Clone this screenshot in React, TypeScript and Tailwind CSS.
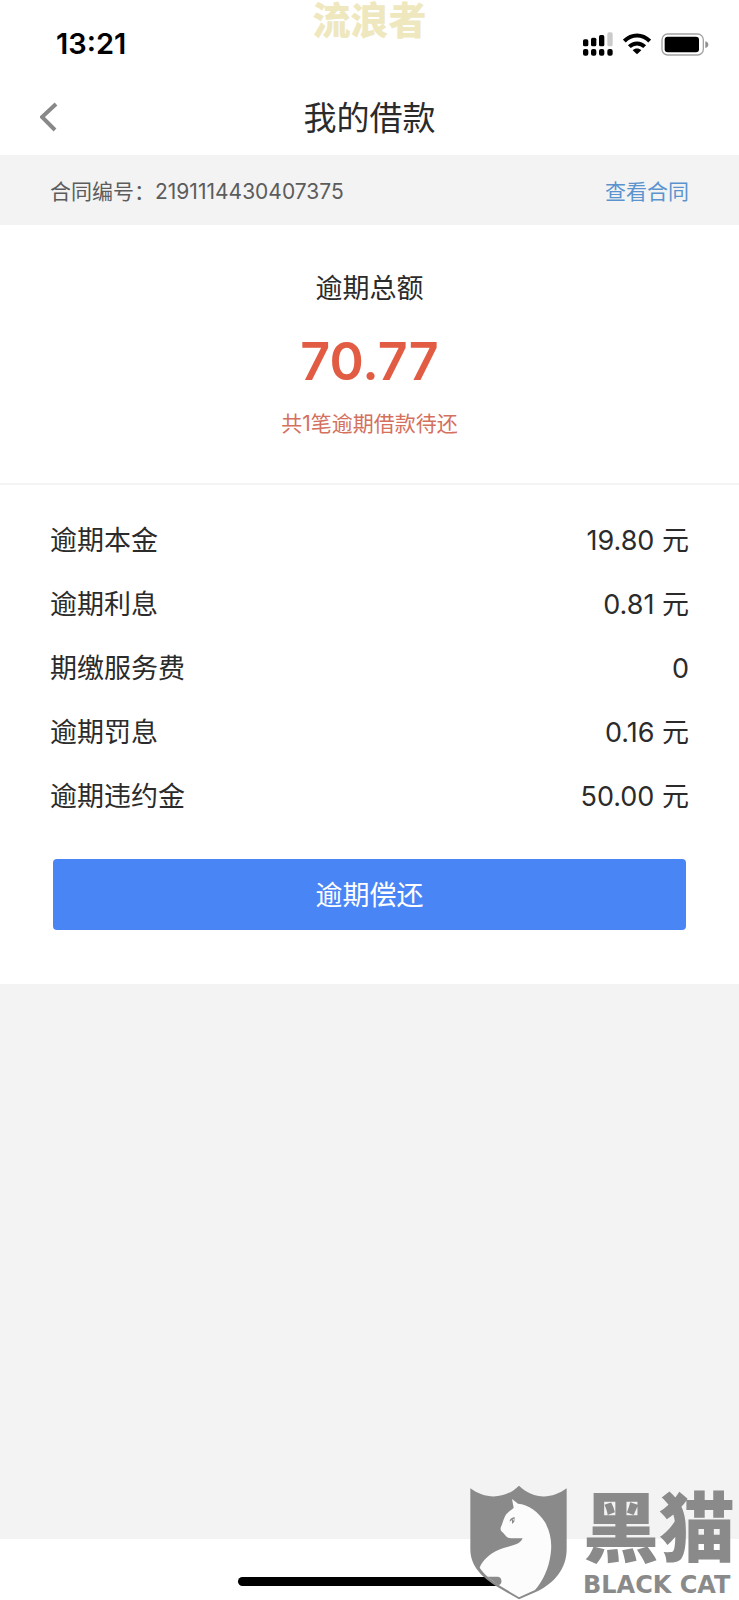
type Fee = {
  label: string;
  amount: string;
};

const fees: Fee[] = [
  { label: "逾期本金", amount: "19.80 元" },
  { label: "逾期利息", amount: "0.81 元" },
  { label: "期缴服务费", amount: "0" },
  { label: "逾期罚息", amount: "0.16 元" },
  { label: "逾期违约金", amount: "50.00 元" },
];

function SignalIcon() {
  return (
    <svg viewBox="0 0 90 72" className="h-6 w-[30px]" aria-hidden="true">
      <rect x="0" y="22" width="16" height="21" rx="5" />
      <rect x="24" y="17" width="16" height="26" rx="5" />
      <rect x="48" y="9" width="16" height="34" rx="5" />
      <rect x="73" y="1" width="16" height="42" rx="5" fill="#cbcbcb" />
      <rect x="0" y="51" width="16" height="20" rx="6" />
      <rect x="24" y="51" width="16" height="20" rx="6" />
      <rect x="48" y="51" width="16" height="20" rx="6" />
      <rect x="73" y="51" width="16" height="20" rx="6" />
    </svg>
  );
}

function WifiIcon() {
  return (
    <svg viewBox="0 0 84 66" className="h-[22px] w-7" fill="none" stroke="#000" strokeWidth="12" aria-hidden="true">
      <path d="M4 24C26 2 58 2 80 24" />
      <path d="M19 41C32 28 52 28 65 41" />
      <path d="M29 52C36 45 48 45 55 52L42 64Z" fill="#000" stroke="none" />
    </svg>
  );
}

function BatteryIcon() {
  return (
    <svg viewBox="0 0 144 69" className="h-[23px] w-12" aria-hidden="true">
      <rect x="3" y="3" width="124" height="63" rx="17" fill="none" stroke="#a3a3a3" strokeWidth="4" />
      <rect x="11" y="11" width="103" height="47" rx="9" />
      <path d="M133 25C145 28 145 42 133 45Z" fill="#909090" />
    </svg>
  );
}

function StatusBar() {
  return (
    <div className="flex h-[78px] items-center justify-between pt-[10px] pr-[30px] pl-14">
      <span className="text-[29px] font-semibold text-black">13:21</span>
      <div className="flex items-center gap-[10px]">
        <SignalIcon />
        <WifiIcon />
        <BatteryIcon />
      </div>
    </div>
  );
}

function BlackCatLogo() {
  return (
    <div className="absolute right-0 bottom-0 flex items-start gap-4 text-[#8b8a8b]">
      <svg viewBox="0 0 291 345" className="h-[115px] w-[97px]" role="img" aria-label="黑猫">
        <path
          d="M1 10C45 43 104 44 147 2C190 44 246 43 290 10V192C290 253 252 293 204 318L147 343L88 309C34 276 1 244 1 192Z"
          fill="currentColor"
        />
        <path
          d="M126 42L144 56C174 58 208 82 225 112C241 139 247 174 242 207C236 252 219 287 195 315L147 337L91 303C66 287 42 269 29 248C38 225 59 207 85 195C120 180 149 183 158 160H123C114 160 107 153 102 146C97 141 90 139 92 128C100 112 102 91 115 82C120 76 127 73 131 68Z"
          fill="#fcfcfc"
        />
        <path d="M52 275H84C98 277 98 300 84 300Z" fill="currentColor" />
        <path d="M119 110C119 103 123 98 134 96L133 110L126 117V105Z" fill="currentColor" />
        <path d="M128 103L132 101L130 108Z" fill="#fff" />
      </svg>
      <div className="flex w-[156px] flex-col">
        <span className="text-[76px] leading-[86px] font-black">黑猫</span>
        <span className="font-['DejaVu_Sans',sans-serif] text-[24px] leading-7 font-bold whitespace-nowrap">
          BLACK CAT
        </span>
      </div>
    </div>
  );
}

export default function App() {
  return (
    <main className="relative flex min-h-screen flex-col overflow-hidden bg-[#f3f3f3] font-['Inter','Noto_Sans_CJK_SC',sans-serif] text-[#2b2b2b]">
      <header className="bg-white">
        <StatusBar />
        <div className="grid h-[77px] grid-cols-[64px_1fr_64px] items-center">
          <button type="button" aria-label="返回" className="flex h-full items-center pl-10">
            <svg viewBox="0 0 18 30" className="h-[30px] w-[18px]" fill="none" stroke="#888" strokeWidth="4">
              <path d="M16 2L2 15L15 28" />
            </svg>
          </button>
          <h1 className="pt-1 text-center text-[33px]">我的借款</h1>
        </div>
      </header>

      <div className="flex h-[70px] items-center justify-between px-[50px] pt-1 text-[21px] text-[#5c5c5c]">
        <p>合同编号：2191114430407375</p>
        <a href="#contract" className="text-[#5b93cf]">
          查看合同
        </a>
      </div>

      <section className="flex flex-col items-center border-b-2 border-[#f3f3f3] bg-white pt-11 pb-[34px]">
        <h2 className="text-[27px] leading-10">逾期总额</h2>
        <p className="mt-5 text-[52px] leading-[66px] font-semibold text-[#e25c43]">70.77</p>
        <p className="mt-1 text-[21px] leading-[50px] text-[#d4705d]">共1笔逾期借款待还</p>
      </section>

      <section className="bg-white pt-6 pb-[54px]">
        <dl className="px-[50px] text-[27px] leading-[64px]">
          {fees.map((fee) => (
            <div key={fee.label} className="flex justify-between">
              <dt>{fee.label}</dt>
              <dd>{fee.amount}</dd>
            </div>
          ))}
        </dl>
        <div className="px-[53px] pt-[30px]">
          <button type="button" className="h-[71px] w-full rounded bg-[#4a85f6] pt-1 text-[27px] text-white">
            逾期偿还
          </button>
        </div>
      </section>

      <footer className="mt-auto flex h-[61px] justify-center bg-white pt-[38px]">
        <div className="h-[9px] w-[264px] rounded-full bg-black" />
      </footer>

      <span className="absolute inset-x-0 top-0 text-center text-[38px] leading-10 font-black text-[#efe8bf]">流浪者</span>
      <BlackCatLogo />
    </main>
  );
}
